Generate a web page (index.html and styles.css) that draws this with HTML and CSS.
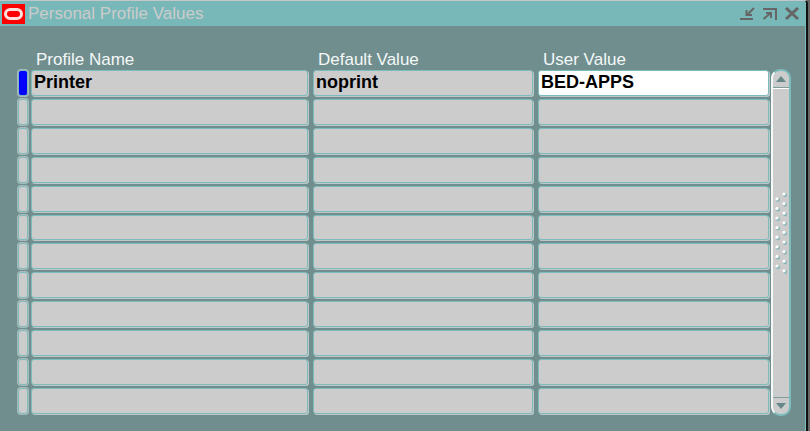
FILE: index.html
```html
<!DOCTYPE html>
<html lang="en">
<head>
    <meta charset="UTF-8">
    <meta name="viewport" content="width=device-width, initial-scale=1.0">
    <title>Personal Profile Values</title>
    <link rel="stylesheet" href="styles.css">
</head>
<body>

    <div class="window">
        <header class="title-bar">
            <svg class="logo" viewBox="0 0 23 20" aria-hidden="true">
                <rect width="23" height="20" fill="#ff0000"/>
                <rect x="3.500" y="5.500" width="16" height="9" rx="4.500" fill="none" stroke="#ffe0dc" stroke-width="3"/>
            </svg>
            <h1>Personal Profile Values</h1>
            <div class="window-buttons">
                <button type="button" aria-label="Minimize">
                    <svg viewBox="0 0 16 14"><path d="M0 12H13M14 1L8 7M6.500 3V8H12" /></svg>
                </button>
                <button type="button" aria-label="Maximize">
                    <svg viewBox="0 0 16 14"><path d="M1 2H14V13M1.500 12L8 6.500M4 6H9V11" /></svg>
                </button>
                <button type="button" aria-label="Close">
                    <svg class="close" viewBox="0 0 16 14"><path d="M2 1L14 12M14 1L2 12" /></svg>
                </button>
            </div>
        </header>

        <main class="content">
            <table class="profile-table">
                <thead>
                    <tr>
                        <td></td>
                        <th scope="col" id="name">Profile Name</th>
                        <th scope="col" id="default">Default Value</th>
                        <th scope="col" id="user">User Value</th>
                    </tr>
                </thead>
                <tbody id="rows"></tbody>
            </table>

            <div class="scrollbar">
                <button type="button" class="scroll-btn up" aria-label="Scroll up">
                    <svg viewBox="0 0 10 6"><path d="M0 6L5 0L10 6Z"/></svg>
                </button>
                <div class="scroll-thumb">
                    <svg class="grip" viewBox="0 0 14 82" id="grip" aria-hidden="true"></svg>
                </div>
                <button type="button" class="scroll-btn down" aria-label="Scroll down">
                    <svg viewBox="0 0 10 6"><path d="M0 0L5 6L10 0Z"/></svg>
                </button>
            </div>
        </main>
    </div>

    <script src="script.js"></script>
</body>
</html>
```

FILE: styles.css
```css
* {
    box-sizing: border-box;
}

body {
    margin: 0;
    font-family: "Liberation Sans", Arial, sans-serif;
    font-size: 17px;
    background-color: #666;
}

.window {
    display: flex;
    flex-direction: column;
    min-height: 100vh;
    margin-right: 2px;
    background-color: #708e8e;
    border-top: 1px solid #c4c8c8;
    border-right: 2px solid #111;
    border-top-right-radius: 4px;
    box-shadow: inset -1px 0 0 #7bbaba;
}

.title-bar {
    display: flex;
    align-items: center;
    height: 25px;
    padding: 0 6px 0 2px;
    background-color: #78b8b8;
    border-top-right-radius: 3px;
}

.logo {
    width: 23px;
    height: 20px;
}

.title-bar h1 {
    flex: 1;
    margin: 0 0 0 3px;
    font-size: 17px;
    font-weight: normal;
    color: #ccc;
}

.window-buttons {
    display: flex;
    gap: 6px;
}

.window-buttons button {
    width: 16px;
    height: 14px;
    padding: 0;
    border: none;
    background: none;
}

.window-buttons svg {
    display: block;
    fill: none;
    stroke: #666;
    stroke-width: 2;
}

.window-buttons .close {
    stroke-width: 3;
}

.content {
    flex: 1;
    display: flex;
    padding: 24px 15px 15px 16px;
}

.profile-table {
    flex: 1;
    display: flex;
    flex-direction: column;
}

.profile-table tr {
    display: grid;
    grid-template-columns: 12px 279fr 222fr 233fr;
    gap: 3px;
}

.profile-table td,
.profile-table th {
    display: flex;
    padding: 0;
    min-width: 0;
}

.profile-table th {
    padding-left: 5px;
    line-height: 19px;
    font-weight: normal;
    color: #f4f8f8;
}

.profile-table tbody {
    flex: 1;
    display: grid;
    grid-auto-rows: 1fr;
}

.profile-table tbody td {
    padding: 1px 2px 2px 0;
}

.profile-table tbody td:first-child {
    padding: 1px 0 2px 2px;
}

.profile-table input {
    width: 100%;
    min-width: 0;
    padding: 0 2px 1px;
    border: 1px solid #7cbcbc;
    border-radius: 3px;
    outline: none;
    background-color: #ccc;
    box-shadow: 1px 1px 0 #bfc6c6;
    font-family: inherit;
    font-size: 18px;
    font-weight: bold;
    line-height: 22px;
    color: #000;
}

.profile-table input.active {
    background-color: #fff;
}

.marker {
    width: 100%;
    border: 1px solid #7cbcbc;
    border-radius: 3px;
    background-color: #ccc;
    box-shadow: 0 0 0 1px #a9b9b9;
}

.marker.current {
    background-color: #0000ff;
}

.scrollbar {
    display: flex;
    flex-direction: column;
    width: 20px;
    margin-top: 19px;
    border: 2px solid #7cbcbc;
    border-left-color: #f4f8f8;
    border-radius: 9px;
    background-color: #ccc;
    overflow: hidden;
}

.scroll-btn {
    display: flex;
    align-items: center;
    justify-content: center;
    height: 16px;
    padding: 0;
    border: none;
    background: none;
}

.scroll-btn svg {
    width: 10px;
    height: 6px;
    fill: #668888;
}

.scroll-thumb {
    flex: 1;
    display: flex;
    align-items: center;
    justify-content: center;
    padding-bottom: 20px;
    border-top: 1px solid #7f9c9c;
    border-bottom: 1px solid #7f9c9c;
    box-shadow: inset 0 1px 0 #fff;
}

.grip {
    width: 14px;
    height: 82px;
}
```

FILE: script.js
```javascript
const ROW_COUNT = 12;
const columns = ['name', 'default', 'user'];
const profiles = [
    { name: 'Printer', default: 'noprint', user: 'BED-APPS' }
];

// Build the profile rows, empty ones included
const rows = document.getElementById('rows');
for (let i = 0; i < ROW_COUNT; i++) {
    const profile = profiles[i] || {};
    const row = document.createElement('tr');

    const markerCell = document.createElement('td');
    const marker = document.createElement('span');
    marker.className = i === 0 ? 'marker current' : 'marker';
    markerCell.appendChild(marker);
    row.appendChild(markerCell);

    columns.forEach(column => {
        const cell = document.createElement('td');
        const input = document.createElement('input');
        input.type = 'text';
        input.value = profile[column] || '';
        input.setAttribute('aria-labelledby', column);
        input.readOnly = column !== 'user';
        if (i === 0 && column === 'user') {
            input.className = 'active';
        }
        cell.appendChild(input);
        row.appendChild(cell);
    });

    rows.appendChild(row);
}

// Raised dots on the scrollbar thumb
let dots = '';
for (let i = 0; i < 17; i++) {
    const x = i % 2 === 0 ? 10 : 3;
    const y = 2 + i * 4.8;
    dots += `<circle cx="${x + 1}" cy="${y + 1}" r="2" fill="#86b4b4"/>`;
    dots += `<circle cx="${x}" cy="${y}" r="1.6" fill="#fff"/>`;
}
document.getElementById('grip').innerHTML = dots;
```
